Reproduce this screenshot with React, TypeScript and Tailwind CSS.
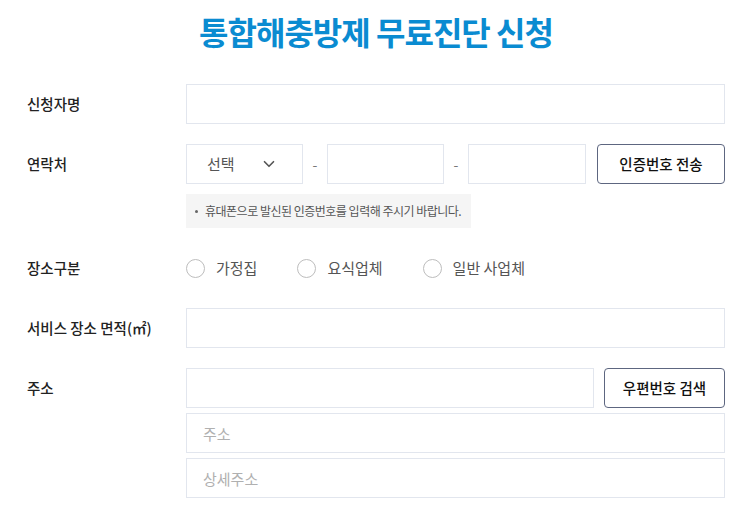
import { ChevronDown } from "lucide-react";

const font = { fontFamily: '"Noto Sans CJK KR", "Noto Sans", sans-serif' };

function Label({ children }: { children: React.ReactNode }) {
  return (
    <div className="flex h-10 w-[159px] shrink-0 items-center text-[14.5px] font-medium text-[#222]">
      {children}
    </div>
  );
}

function TextInput({ placeholder, className = "" }: { placeholder?: string; className?: string }) {
  return (
    <input
      type="text"
      placeholder={placeholder}
      className={
        "h-10 border border-[#e2e6ee] bg-white px-4 text-[15px] text-[#333] outline-none placeholder:text-[#b0b0b0] " +
        className
      }
    />
  );
}

function Radio({ label }: { label: string }) {
  return (
    <label className="flex items-center gap-[11px]">
      <span className="size-[19px] rounded-full border border-[#bdbdbd] bg-white" />
      <span className="text-[15px] text-[#555]">{label}</span>
    </label>
  );
}

export default function App() {
  return (
    <div className="min-h-screen bg-white pl-[27px] pr-[12px]" style={font}>
      <h1 className="flex h-[84px] justify-center pt-[9px] text-[32px] leading-[44px] font-bold tracking-[-1px] text-[#0a8bd1]">
        통합해충방제 무료진단 신청
      </h1>

      <div className="flex flex-col gap-5">
        <div className="flex">
          <Label>신청자명</Label>
          <TextInput className="flex-1" />
        </div>

        <div className="flex">
          <Label>연락처</Label>
          <div className="flex flex-1 flex-col">
            <div className="flex items-center">
              <button className="flex h-10 w-[117px] items-center justify-between border border-[#e2e6ee] bg-white pr-6 pl-5 text-[15px] text-[#555]">
                <span>선택</span>
                <ChevronDown className="size-[18px] text-[#555]" strokeWidth={2.2} />
              </button>
              <span className="w-[24px] text-center text-[14px] text-[#777]">-</span>
              <TextInput className="w-[117px]" />
              <span className="w-[24px] text-center text-[14px] text-[#777]">-</span>
              <TextInput className="w-[118px]" />
              <button className="ml-[11px] h-10 w-[128px] rounded-[4px] border border-[#5d6680] bg-white text-[14.5px] font-medium text-[#111]">
                인증번호 전송
              </button>
            </div>
            <div className="mt-[10px] flex h-[34px] w-fit items-center gap-[7px] bg-[#f5f5f5] pr-[10px] pl-[9px] text-[12px] whitespace-nowrap tracking-[-0.5px] text-[#555]">
              <span className="size-[3px] rounded-full bg-[#666]" />
              휴대폰으로 발신된 인증번호를 입력해 주시기 바랍니다.
            </div>
          </div>
        </div>

        <div className="flex">
          <Label>장소구분</Label>
          <div className="flex h-10 items-center gap-[40px]">
            <Radio label="가정집" />
            <Radio label="요식업체" />
            <Radio label="일반 사업체" />
          </div>
        </div>

        <div className="flex">
          <Label>서비스 장소 면적(㎡)</Label>
          <TextInput className="flex-1" />
        </div>

        <div className="flex">
          <Label>주소</Label>
          <div className="flex flex-1 flex-col gap-[5px]">
            <div className="flex gap-[10px]">
              <TextInput className="flex-1" />
              <button className="h-10 w-[121px] rounded-[4px] border border-[#5d6680] bg-white text-[14.5px] font-medium text-[#111]">
                우편번호 검색
              </button>
            </div>
            <TextInput placeholder="주소" />
            <TextInput placeholder="상세주소" />
          </div>
        </div>
      </div>
    </div>
  );
}
